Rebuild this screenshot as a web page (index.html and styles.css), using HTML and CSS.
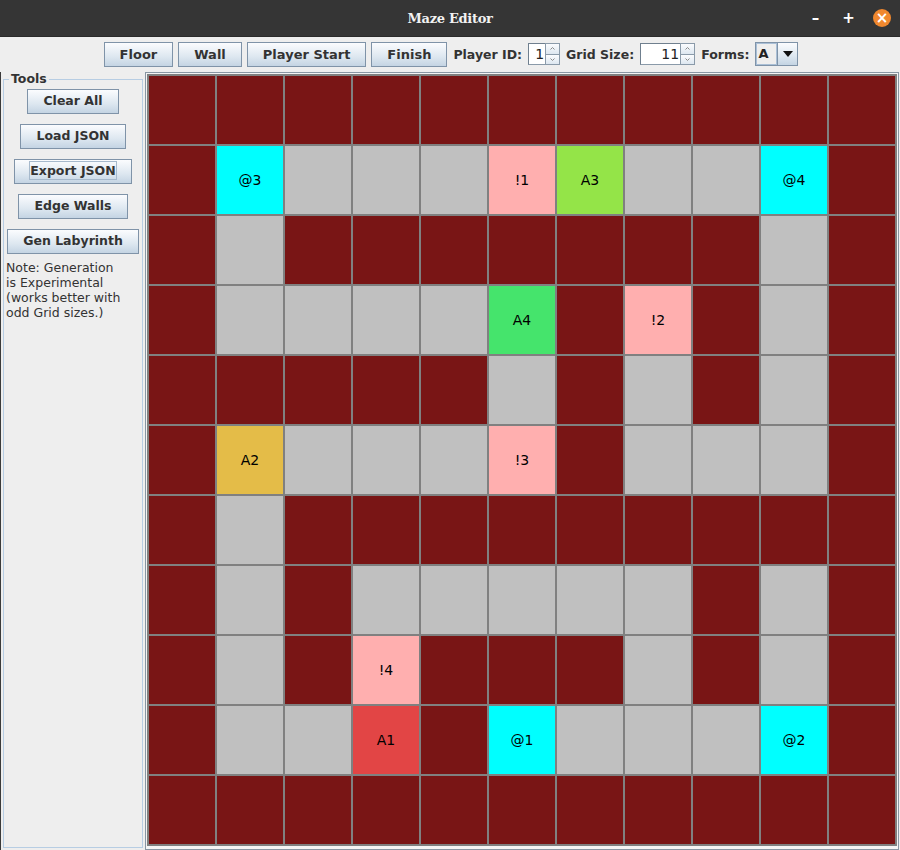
FILE: index.html
```html
<!DOCTYPE html>
<html>
<head>
<meta charset="utf-8">
<link rel="stylesheet" href="styles.css">
</head>
<body>
<div class="window">
  <div class="titlebar">
    <span class="title">Maze Editor</span>
    <div class="winctl">
      <span class="ctl-min">&#8211;</span>
      <span class="ctl-max">+</span>
      <span class="ctl-close">&#215;</span>
    </div>
  </div>
  <div class="toolbar">
    <button class="btn">Floor</button>
    <button class="btn">Wall</button>
    <button class="btn">Player Start</button>
    <button class="btn">Finish</button>
    <span class="lbl">Player ID:</span>
    <div class="spinner">
      <span class="spin-field w-small">1</span>
      <span class="spin-arrows">
        <span class="arr up"><svg width="5" height="3" viewBox="0 0 5 3"><path d="M0.5 2.5L2.5 0.5L4.5 2.5" fill="none" stroke="#8a8a8a" stroke-width="1"/></svg></span>
        <span class="arr down"><svg width="5" height="3" viewBox="0 0 5 3"><path d="M0.5 0.5L2.5 2.5L4.5 0.5" fill="none" stroke="#8a8a8a" stroke-width="1"/></svg></span>
      </span>
    </div>
    <span class="lbl">Grid Size:</span>
    <div class="spinner">
      <span class="spin-field w-big">11</span>
      <span class="spin-arrows">
        <span class="arr up"><svg width="5" height="3" viewBox="0 0 5 3"><path d="M0.5 2.5L2.5 0.5L4.5 2.5" fill="none" stroke="#8a8a8a" stroke-width="1"/></svg></span>
        <span class="arr down"><svg width="5" height="3" viewBox="0 0 5 3"><path d="M0.5 0.5L2.5 2.5L4.5 0.5" fill="none" stroke="#8a8a8a" stroke-width="1"/></svg></span>
      </span>
    </div>
    <span class="lbl">Forms:</span>
    <div class="combo">
      <span class="combo-field">A</span>
      <span class="combo-btn"><svg width="10" height="6" viewBox="0 0 10 6"><path d="M0 0H10L5 6Z" fill="#111"/></svg></span>
    </div>
  </div>
  <div class="main">
    <fieldset class="tools">
      <legend>Tools</legend>
      <div class="tool-buttons">
        <button class="btn tbtn">Clear All</button>
        <button class="btn tbtn">Load JSON</button>
        <button class="btn tbtn tbtn-focus"><span class="focus">Export JSON</span></button>
        <button class="btn tbtn">Edge Walls</button>
        <button class="btn tbtn">Gen Labyrinth</button>
      </div>
      <p class="note">Note: Generation<br>is Experimental<br>(works better with<br>odd Grid sizes.)</p>
    </fieldset>
    <div class="board">
      <div class="grid">
        <div class="w"></div><div class="w"></div><div class="w"></div><div class="w"></div><div class="w"></div><div class="w"></div><div class="w"></div><div class="w"></div><div class="w"></div><div class="w"></div><div class="w"></div>
        <div class="w"></div><div class="c">@3</div><div class="f"></div><div class="f"></div><div class="f"></div><div class="p">!1</div><div class="a3">A3</div><div class="f"></div><div class="f"></div><div class="c">@4</div><div class="w"></div>
        <div class="w"></div><div class="f"></div><div class="w"></div><div class="w"></div><div class="w"></div><div class="w"></div><div class="w"></div><div class="w"></div><div class="w"></div><div class="f"></div><div class="w"></div>
        <div class="w"></div><div class="f"></div><div class="f"></div><div class="f"></div><div class="f"></div><div class="a4">A4</div><div class="w"></div><div class="p">!2</div><div class="w"></div><div class="f"></div><div class="w"></div>
        <div class="w"></div><div class="w"></div><div class="w"></div><div class="w"></div><div class="w"></div><div class="f"></div><div class="w"></div><div class="f"></div><div class="w"></div><div class="f"></div><div class="w"></div>
        <div class="w"></div><div class="a2">A2</div><div class="f"></div><div class="f"></div><div class="f"></div><div class="p">!3</div><div class="w"></div><div class="f"></div><div class="f"></div><div class="f"></div><div class="w"></div>
        <div class="w"></div><div class="f"></div><div class="w"></div><div class="w"></div><div class="w"></div><div class="w"></div><div class="w"></div><div class="w"></div><div class="w"></div><div class="w"></div><div class="w"></div>
        <div class="w"></div><div class="f"></div><div class="w"></div><div class="f"></div><div class="f"></div><div class="f"></div><div class="f"></div><div class="f"></div><div class="w"></div><div class="f"></div><div class="w"></div>
        <div class="w"></div><div class="f"></div><div class="w"></div><div class="p">!4</div><div class="w"></div><div class="w"></div><div class="w"></div><div class="f"></div><div class="w"></div><div class="f"></div><div class="w"></div>
        <div class="w"></div><div class="f"></div><div class="f"></div><div class="a1">A1</div><div class="w"></div><div class="c">@1</div><div class="f"></div><div class="f"></div><div class="f"></div><div class="c">@2</div><div class="w"></div>
        <div class="w"></div><div class="w"></div><div class="w"></div><div class="w"></div><div class="w"></div><div class="w"></div><div class="w"></div><div class="w"></div><div class="w"></div><div class="w"></div><div class="w"></div>
      </div>
    </div>
  </div>
</div>
</body>
</html>
```
FILE: styles.css
```css
* { box-sizing: border-box; }
html, body { margin: 0; padding: 0; }
body {
  width: 900px;
  height: 850px;
  overflow: hidden;
  background: #eeeeee;
  font-family: "DejaVu Sans", sans-serif;
  color: #333333;
}
.window { width: 900px; height: 850px; display: flex; flex-direction: column; }

.titlebar {
  height: 37px;
  background: #353535;
  border-bottom: 1px solid #2a2a2a;
  display: flex;
  align-items: center;
  justify-content: center;
  position: relative;
  flex: none;
}
.title {
  font-family: "DejaVu Serif", "Liberation Serif", serif;
  font-weight: bold;
  font-size: 13px;
  color: #f2f2f2;
  letter-spacing: -0.3px;
}
.winctl {
  position: absolute;
  right: 9px;
  top: 0;
  height: 36px;
  display: flex;
  align-items: center;
}
.ctl-min, .ctl-max {
  width: 33px;
  text-align: center;
  color: #ffffff;
  font-weight: bold;
  font-size: 15px;
}
.ctl-max { margin-right: 8px; }
.ctl-close {
  width: 18px;
  height: 18px;
  border-radius: 50%;
  background: #f0882e;
  color: #ffffff;
  font-weight: bold;
  font-size: 15px;
  line-height: 18px;
  text-align: center;
}

.toolbar {
  height: 35px;
  flex: none;
  display: flex;
  align-items: center;
  justify-content: center;
  gap: 5px;
  padding-bottom: 1px;
  padding-left: 2px;
}
.btn {
  height: 25px;
  padding: 0 16px;
  border: 1px solid #7f93a8;
  border-radius: 0;
  background: linear-gradient(#fbfcfe, #dde7f0 60%, #c4d4e3);
  font-family: "DejaVu Sans", sans-serif;
  font-weight: bold;
  font-size: 13px;
  color: #333333;
  margin: 0;
  line-height: 1;
}
.toolbar .btn { padding: 0 15px; }
.lbl {
  font-weight: bold;
  font-size: 12.5px;
  color: #333333;
  margin-left: 1px;
}
.spinner {
  display: flex;
  height: 22px;
  margin-left: 1px;
}
.spin-field {
  height: 22px;
  border: 1px solid #8a9aa9;
  border-right: none;
  border-top-color: #6f7f8e;
  border-left-color: #6f7f8e;
  background: #ffffff;
  font-size: 14px;
  line-height: 20px;
  text-align: right;
  padding-right: 1px;
  color: #222222;
}
.w-small { width: 17px; }
.w-big { width: 40px; }
.spin-arrows {
  width: 15px;
  height: 22px;
  display: flex;
  flex-direction: column;
  border: 1px solid #8a9aa9;
}
.arr {
  flex: 1;
  display: flex;
  align-items: center;
  justify-content: center;
  background: linear-gradient(#fbfcfe, #dde7f0);
}
.arr.up { border-bottom: 1px solid #8a9aa9; }
.combo {
  display: flex;
  height: 24px;
  margin-left: 1px;
  border: 1px solid #7f93a8;
}
.combo-field {
  width: 21px;
  border: 1px solid #a9bfd6;
  background: #eeeeee;
  font-weight: bold;
  font-size: 13px;
  line-height: 20px;
  padding-left: 1px;
  color: #222222;
}
.combo-btn {
  width: 20px;
  background: linear-gradient(#fbfcfe, #dde7f0 60%, #c4d4e3);
  border-left: 1px solid #7f93a8;
  display: flex;
  align-items: center;
  justify-content: center;
}

.main {
  flex: 1;
  display: flex;
  min-height: 0;
  box-shadow: inset 1px 0 #3a3a3a;
}
.tools {
  width: 140px;
  margin: 0 2px 2px 3px;
  padding: 0 2px;
  border: 1px solid #b7cde3;
  min-width: 0;
}
.tools legend {
  font-weight: bold;
  font-size: 12.5px;
  line-height: 14px;
  padding: 0 2px;
  margin-left: 3px;
  color: #333333;
}
.tool-buttons {
  display: flex;
  flex-direction: column;
  align-items: center;
  gap: 10px;
  padding-top: 3px;
}
.tbtn { padding: 0 15px; font-size: 12.5px; }
.tbtn-focus { padding: 0 14px; }
.focus {
  border: 1px solid #a6b9cc;
  padding: 1px 0;
}
.note {
  margin: 6px 0 0 0;
  font-size: 12.5px;
  line-height: 15px;
  color: #333333;
}

.board {
  width: 754px;
  height: 778px;
  border: 1px solid #8896a3;
  padding: 1px;
  background: #f4f4f4;
  flex: none;
}
.grid {
  display: grid;
  grid-template-columns: repeat(11, 66px);
  grid-auto-rows: 68px;
  gap: 2px;
  padding: 2px;
  background: #808080;
  width: 750px;
  height: 772px;
}
.grid > div {
  display: flex;
  align-items: center;
  justify-content: center;
  font-size: 14px;
  color: #000000;
}
.w { background: #791515; }
.f { background: #c0c0c0; }
.c { background: #00ffff; }
.p { background: #ffafaf; }
.a1 { background: #e24545; }
.a2 { background: #e4bc48; }
.a3 { background: #94e448; }
.a4 { background: #45e46c; }
```
